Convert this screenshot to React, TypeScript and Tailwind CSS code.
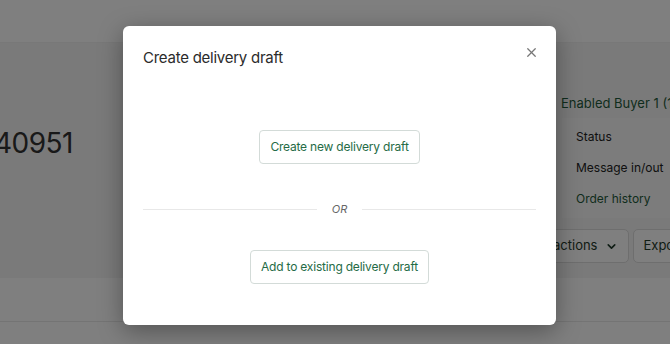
import { X, ChevronDown } from "lucide-react";

const MENU = [
  { label: "Status", green: false },
  { label: "Message in/out", green: false },
  { label: "Order history", green: true },
];

function Page() {
  return (
    <div className="w-[670px] h-[344px] bg-white overflow-hidden font-['Inter',sans-serif]">
      <div className="h-[43px] bg-white border-b border-[#f0f0f0]" />
      <div className="h-[235px] bg-[#f5f5f5] flex">
        <div className="flex-1 pt-[86px]">
          <p className="text-[28px] text-[#333] leading-none -ml-[17px] tracking-[-0.5px]">140951</p>
        </div>
        <div className="w-[112px] pt-[54px] flex flex-col">
          <p className="text-[13px] text-[#1f5a3a] leading-none pl-[3px] whitespace-nowrap">Enabled Buyer 1 (1</p>
          <div className="mt-[8px] ml-[4px] bg-[#f8f8f8] h-[100px] flex flex-col justify-center gap-[19px] pl-[14px]">
            {MENU.map((m) => (
              <span key={m.label} className={`text-[12px] leading-none whitespace-nowrap ${m.green ? "text-[#1f5a3a]" : "text-[#222]"}`}>
                {m.label}
              </span>
            ))}
          </div>
          <div className="mt-[11px] flex gap-[4px] -ml-[44px]">
            <div className="h-[34px] w-[120px] border border-[#dcdcdc] rounded-[5px] bg-white flex items-center justify-end pr-[10px] gap-[8px]">
              <span className="text-[13px] text-[#1f3a2a] whitespace-nowrap">Other actions</span>
              <ChevronDown size={13} strokeWidth={3} className="text-[#1f3a2a]" />
            </div>
            <div className="h-[34px] w-[60px] border border-[#dcdcdc] rounded-[5px] bg-white flex items-center pl-[9px]">
              <span className="text-[13px] text-[#1f3a2a]">Export</span>
            </div>
          </div>
        </div>
      </div>
      <div className="h-[44px] bg-white border-b border-[#e8e8e8]" />
    </div>
  );
}

export default function App() {
  return (
    <div className="relative w-[670px] h-[344px] overflow-hidden">
      <Page />
      <div className="absolute inset-0 bg-black/50" />
      <div className="absolute left-[123px] top-[26px] w-[433px] h-[299px] bg-white rounded-[6px] shadow-[0_6px_24px_rgba(0,0,0,0.35)] font-['Inter',sans-serif] flex flex-col">
        <div className="flex items-start justify-between pl-[20px] pr-[17px] pt-[22px]">
          <h2 className="text-[15px] text-[#2b2b2b] leading-[20px] tracking-[-0.25px]">Create delivery draft</h2>
          <X size={15} strokeWidth={2} className="text-[#777] mt-[-3px]" />
        </div>
        <div className="flex flex-col items-center pt-[62px]">
          <button className="h-[34px] px-[10px] border border-[#d3dbd8] rounded-[4px] text-[12px] tracking-[-0.2px] text-[#256b46] bg-white">
            Create new delivery draft
          </button>
          <div className="w-[393px] flex items-center gap-[14px] mt-[40px]">
            <div className="flex-1 h-px bg-[#e8e8e8]" />
            <span className="text-[11px] italic text-[#666] leading-none px-[1px]">OR</span>
            <div className="flex-1 h-px bg-[#e8e8e8]" />
          </div>
          <button className="h-[34px] px-[10px] border border-[#d3dbd8] rounded-[4px] text-[12px] tracking-[-0.2px] text-[#256b46] bg-white mt-[35px]">
            Add to existing delivery draft
          </button>
        </div>
      </div>
    </div>
  );
}
